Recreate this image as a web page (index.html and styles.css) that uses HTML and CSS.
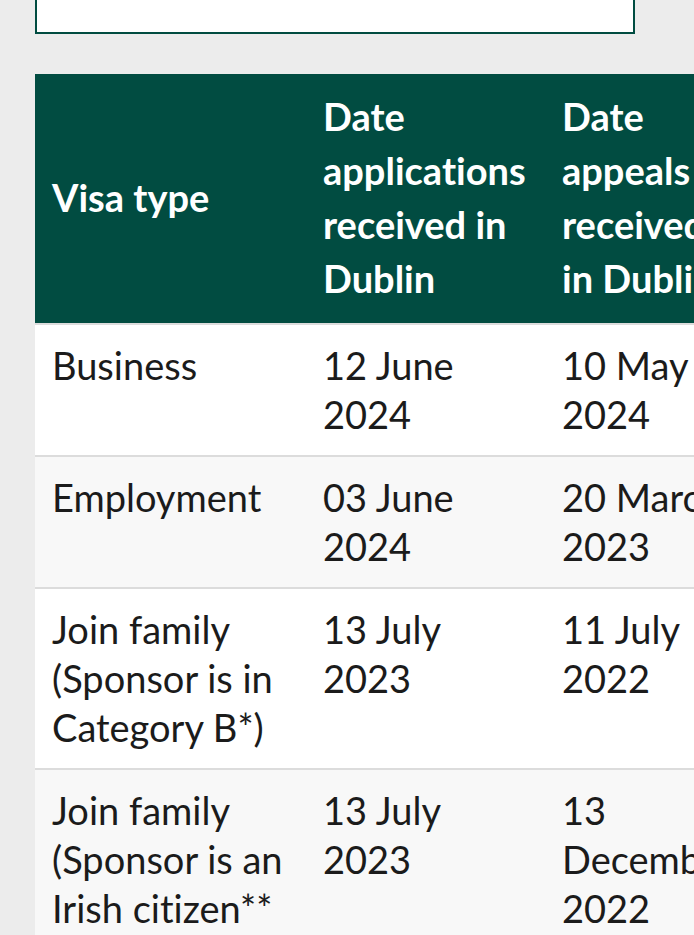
FILE: index.html
```html
<!DOCTYPE html>
<html lang="en">
<head>
<meta charset="utf-8">
<title>Visa processing dates</title>
<link rel="stylesheet" href="styles.css">
</head>
<body>
<div class="page">
  <div class="search-box"></div>
  <div class="table-wrap">
    <table class="dates">
      <colgroup>
        <col class="c1"><col class="c2"><col class="c3"><col class="c4">
      </colgroup>
      <thead>
        <tr>
          <th>Visa type</th>
          <th>Date applications received in Dublin</th>
          <th>Date appeals received in Dublin</th>
          <th>Date reviews received in Dublin</th>
        </tr>
      </thead>
      <tbody>
        <tr><td>Business</td><td>12 June 2024</td><td>10 May 2024</td><td>N/A</td></tr>
        <tr><td>Employment</td><td>03 June 2024</td><td>20 March 2023</td><td>N/A</td></tr>
        <tr><td>Join family (Sponsor is in Category B*)</td><td>13 July 2023</td><td>11 July 2022</td><td>N/A</td></tr>
        <tr><td>Join family (Sponsor is an Irish citizen**</td><td>13 July 2023</td><td>13 December 2022</td><td>N/A</td></tr>
      </tbody>
    </table>
  </div>
</div>
</body>
</html>
```
FILE: styles.css
```css
html, body {
  margin: 0;
  padding: 0;
  background: #ececec;
}
body {
  font-family: Lato, "Open Sans", sans-serif;
  color: #1b1b1b;
  overflow: hidden;
  font-variant-ligatures: no-common-ligatures;
}
.page {
  padding-left: 35px;
}
.search-box {
  width: 596px;
  height: 32px;
  background: #fff;
  border: 2px solid #014c41;
  border-top: 0;
}
.table-wrap {
  margin-top: 40px;
  overflow: hidden;
}
.dates {
  border-collapse: collapse;
  table-layout: fixed;
  width: 924px;
}
.c1 { width: 271px; }
.c2 { width: 239px; }
.c3 { width: 214px; }
.c4 { width: 200px; }
.dates th {
  background: #014c41;
  color: #fff;
  font-weight: 700;
  font-size: 38px;
  line-height: 54px;
  text-align: left;
  vertical-align: middle;
  padding: 15px 15px 18px 17px;
  border-bottom: 2px solid #dcdcdc;
}
.dates td {
  font-size: 38px;
  line-height: 49px;
  vertical-align: top;
  padding: 16px 17px;
  border-bottom: 2px solid #dcdcdc;
}
.dates tbody tr:nth-child(odd) { background: #fff; }
.dates tbody tr:nth-child(even) { background: #f8f8f8; }
```
